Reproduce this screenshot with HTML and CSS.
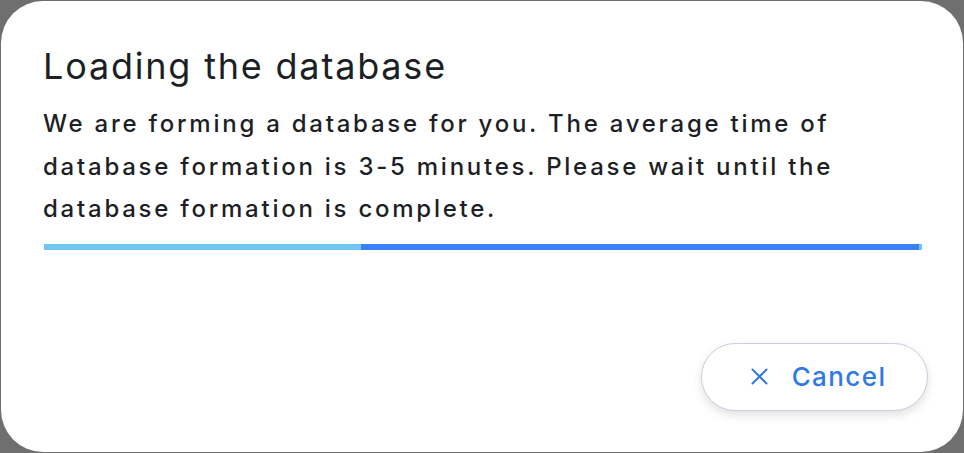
FILE: index.html
```html
<!DOCTYPE html>
<html>
<head>
<meta charset="utf-8">
<link rel="stylesheet" href="styles.css">
</head>
<body>
<div class="dialog">
  <h1 class="title">Loading the database</h1>
  <p class="text">We are forming a database for you. The average time of database formation is 3-5 minutes. Please wait until the database formation is complete.</p>
  <div class="progress">
    <div class="seg seg-light" style="width:317px"></div>
    <div class="seg seg-dark"></div>
    <div class="seg seg-tip"></div>
  </div>
  <div class="actions">
    <button class="cancel">
      <svg class="x" width="17" height="17" viewBox="0 0 17 17"><path d="M1.5 1.5L15.5 15.5M15.5 1.5L1.5 15.5" stroke="#2f7ae5" stroke-width="2" stroke-linecap="round"/></svg>
      <span>Cancel</span>
    </button>
  </div>
</div>
</body>
</html>
```
FILE: styles.css
```css
html, body {
  margin: 0;
  padding: 0;
  width: 964px;
  height: 453px;
  background: #6f6f6f;
  overflow: hidden;
}
.dialog {
  box-sizing: border-box;
  margin: 1px;
  width: 962px;
  height: 451px;
  background: #fff;
  border-radius: 42px;
  padding: 41px 42px 0 42px;
  font-family: Inter, "Noto Sans", sans-serif;
  color: #1d1f26;
  display: flex;
  flex-direction: column;
}
.title {
  margin: 0;
  font-size: 36px;
  font-weight: 400;
  line-height: 48px;
  letter-spacing: 1.8px;
}
.text {
  margin: 13px 0 0;
  font-size: 24px;
  font-weight: 500;
  line-height: 42.5px;
  letter-spacing: 2.75px;
  max-width: 860px;
}
.progress {
  margin-top: 13px;
  margin-left: 1px;
  display: flex;
  height: 6px;
  width: 878px;
}
.seg-light { background: #6ec6f2; }
.seg-dark { background: #3a80f5; flex: 1; }
.seg-tip { background: #6ec6f2; width: 3px; }
.actions {
  display: flex;
  justify-content: flex-end;
  margin-top: 93px;
}
.cancel {
  box-sizing: border-box;
  width: 227px;
  height: 68px;
  margin-right: -7px;
  border: 1.5px solid #c9cde0;
  border-radius: 34px;
  background: #fff;
  box-shadow: 0 4px 10px rgba(0,0,0,0.12);
  display: flex;
  align-items: center;
  justify-content: center;
  gap: 24px;
  font-family: Inter, "Noto Sans", sans-serif;
  font-size: 26px;
  font-weight: 500;
  color: #2f7ae5;
  letter-spacing: 1.4px;
  padding: 0 0 0 8px;
}
.x { flex: none; }
```
